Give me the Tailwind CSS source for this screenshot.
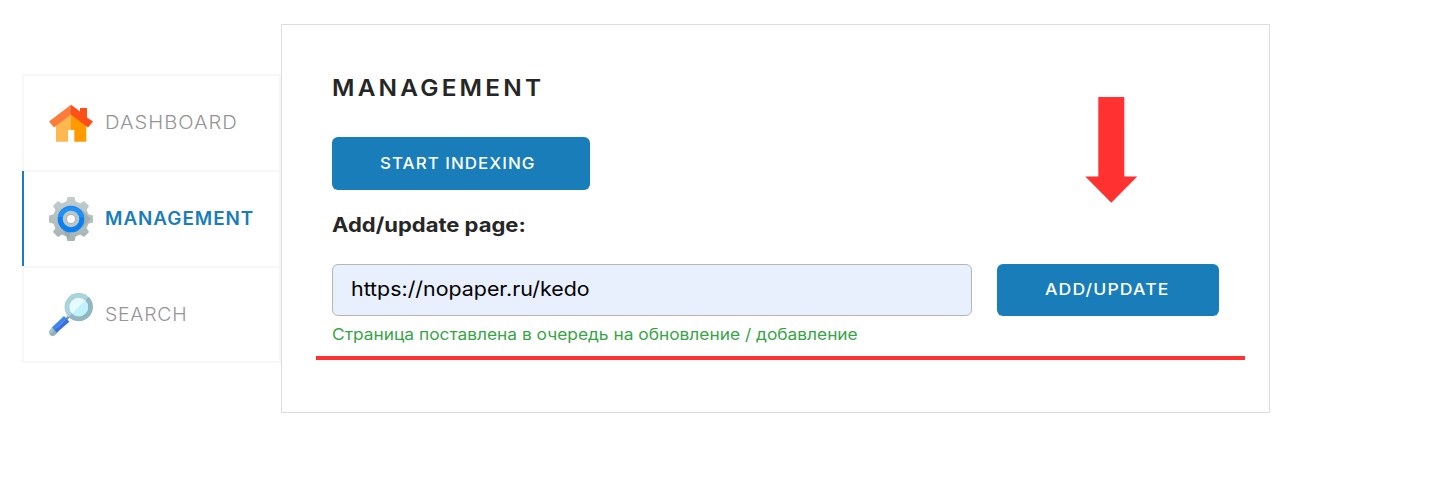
<!DOCTYPE html>
<html lang="en"><head><meta charset="utf-8"><title>Management</title>
<script src="https://cdn.jsdelivr.net/npm/@tailwindcss/browser@4"></script></head>
<body class="bg-white font-['Inter','Noto_Sans',sans-serif] text-[#262626] h-[479px] overflow-hidden">
<div class="flex pl-[22px] pt-6">
<nav class="mt-[50px] w-[259px] h-[289px] border-2 border-[#f7f7f7] text-[18px] text-[#959595]">
<a class="flex h-[94px] items-center gap-[12px] pl-[25px]">
<svg class="size-[44px] shrink-0" viewBox="0 0 44 44"><path fill="#ffb74f" d="M7 23 22 11V40.700H7z"/><path fill="#ff9a00" d="M22 11 37.300 23V40.700H22z"/><path fill="#fff" d="M19 29h6.300v12H19z"/><path fill="#ff4f18" d="M22 3.700 31 10.500V7h7v9.500L44 20.500 39 26.500 22 13.500z"/><path fill="#ff7b3c" d="M22 3.700V13.500L5 26.500 0 20.500z"/></svg>
<span class="origin-left scale-x-[1.12] pb-px font-light tracking-[0.9px]">DASHBOARD</span></a>
<a class="-ml-[2px] flex h-[98px] items-center gap-[12px] border-y-2 border-[#f7f7f7] font-semibold text-[#187db9]"><i class="-mt-[2px] mr-[13px] h-[95px] w-[2px] bg-[#187db9]"></i>
<svg class="size-[44px] shrink-0" viewBox="0 0 44 44"><defs><linearGradient id="metal" x1="0" y1="0" x2="0" y2="1"><stop offset="0" stop-color="#c3cdcc"/><stop offset="1" stop-color="#a5b3b5"/></linearGradient><clipPath id="gear"><circle cx="22" cy="22" r="18"/><path d="M18.500 0h7l1.500 6H17zM18.500 44h7l1.500-6H17zM0 18.500v7L6 27V17zM44 18.500v7L38 27V17z"/><path transform="rotate(45 22 22)" d="M18.500 0h7l1.500 6H17zM18.500 44h7l1.500-6H17zM0 18.500v7L6 27V17zM44 18.500v7L38 27V17z"/></clipPath></defs>
<g clip-path="url(#gear)"><path fill="url(#metal)" d="M0 0h44v44H0z"/><path fill="#8b9ca0" opacity=".45" d="M32 12 42 22 34 30 22 35.300 19 42 14 33z"/></g>
<circle cx="22" cy="22" r="13.300" fill="#0b80f2"/><path fill="#1f90f7" d="M9 20a13.300 13.300 0 0 1 26 0z"/><circle cx="22" cy="22" r="8.300" fill="#bcc7c8"/><circle cx="22" cy="22" r="5" fill="#a6b3b5"/><circle cx="22" cy="22" r="4" fill="#fff"/></svg>
<span class="origin-left scale-x-[1.05] pb-[2px] tracking-[0.9px]">MANAGEMENT</span></a>
<a class="flex h-[93px] items-center gap-[12px] pl-[25px]">
<svg class="size-[44px] shrink-0" viewBox="0 0 44 44"><path d="M16 27.500 22 21.500" stroke="#849ba4" stroke-width="2.500"/><path d="M5.500 37.500 3.700 39.300" stroke="#a2c3cb" stroke-width="7.500" stroke-linecap="round"/><path d="M7.700 39.700 6 41.400a3.800 3.800 0 0 1-5 0L5.300 37z" fill="#8eb0b9"/><path fill="#3b88f5" d="M15 23 17.700 25.700 5.300 37 3 34.300z"/><path fill="#3b6fdc" d="M17.700 25.700 20.300 28.700 7.700 39.700 5.300 37z"/><circle cx="29.700" cy="14" r="14.200" fill="#abd3dc"/><path d="M39.740 3.960A14.200 14.200 0 0 1 19.660 24.040z" fill="#90b6c0"/><circle cx="29.700" cy="14" r="9.300" fill="#e5fbff"/><path d="M36.280 7.420A9.300 9.300 0 0 1 23.120 20.580z" fill="#bff1ff"/></svg>
<span class="origin-left scale-x-[1.08] pb-px font-light tracking-[0.7px]">SEARCH</span></a>
</nav>
<main class="relative h-[389px] w-[989px] border border-[#ddd] pl-[50px]">
<h1 class="mt-[47px] h-[32px] text-[23px] leading-[32px] font-semibold"><span class="inline-block origin-left scale-x-[1.06] tracking-[3px]">MANAGEMENT</span></h1>
<button class="mt-[33px] block h-[53px] w-[258px] rounded-[6px] bg-[#187db9] pb-[2px] pl-[48px] text-left text-[16px] font-medium text-white"><span class="inline-block origin-left scale-x-[1.06] tracking-[0.97px]">START INDEXING</span></button>
<h2 class="mt-[21px] h-[28px] text-[20px] leading-[28px] font-bold"><span class="inline-block origin-left scale-x-[1.1]">Add/update page:</span></h2>
<div class="mt-[25px] flex gap-[25px]"><div class="flex h-[52px] w-[640px] items-center rounded-[6px] border border-[#b6b6b6] bg-[#e8effd] pb-[2px] pl-[18px] text-[20px] text-black"><span class="origin-left scale-x-[1.069]">https://nopaper.ru/kedo</span></div>
<button class="h-[52px] w-[222px] rounded-[6px] bg-[#187db9] pb-[2px] pl-[48px] text-left text-[16px] font-medium text-white"><span class="inline-block origin-left scale-x-[1.1] tracking-[1.04px]">ADD/UPDATE</span></button></div>
<p class="mt-[6px] h-[24px] text-[16px] leading-[24px] text-[#37a447]"><span class="inline-block origin-left scale-x-[1.083]">Страница поставлена в очередь на обновление / добавление</span></p>
<div class="absolute top-[331px] left-[34px] h-[4px] w-[929px] bg-[#ff3131]"></div>
<svg class="absolute top-[72px] left-[803px] h-[106px] w-[53px]" viewBox="0 0 53 106"><path fill="#ff3131" d="M13.300 0h26v79.500h13L26.300 105.800.3 79.500h13z"/></svg>
</main></div>
</body></html>
